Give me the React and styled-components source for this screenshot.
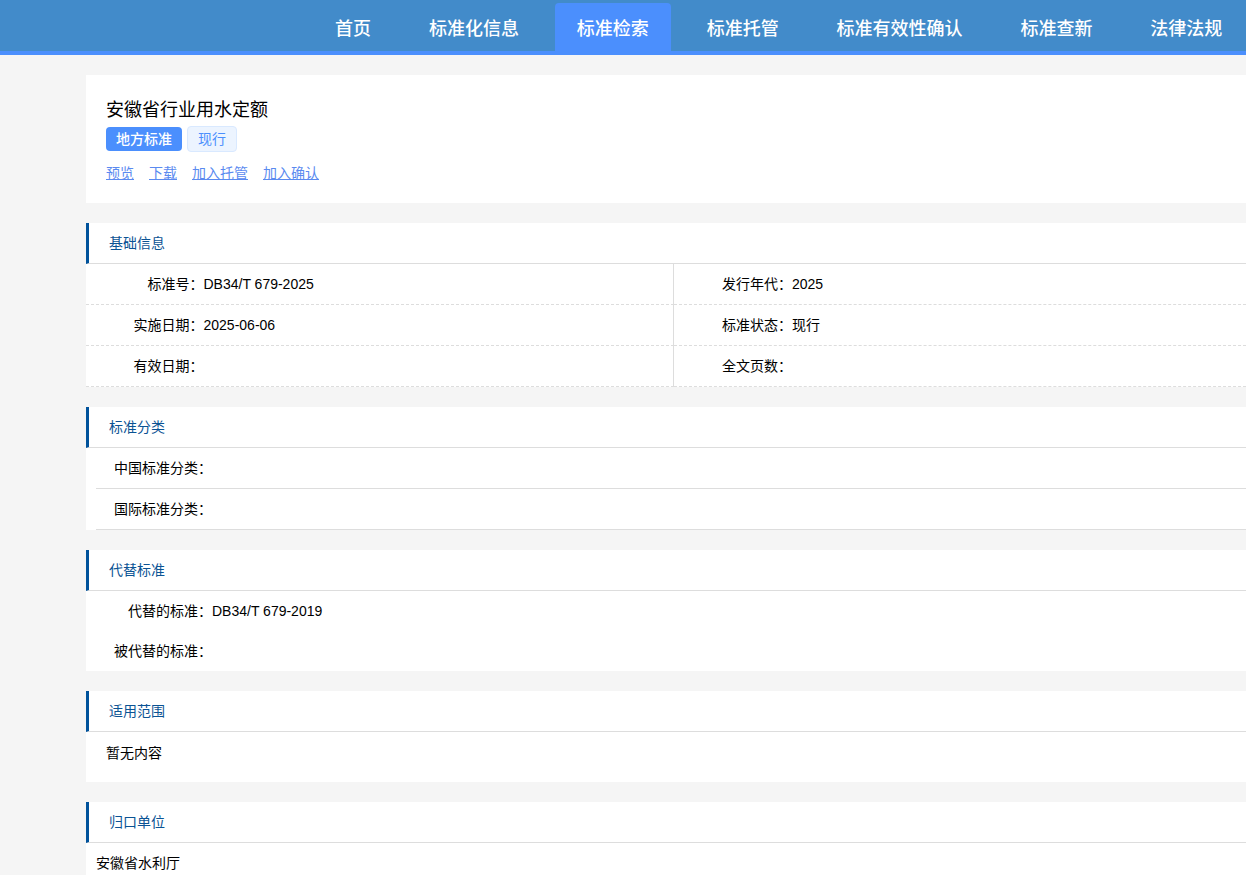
import React from "react";
import styled, { createGlobalStyle } from "styled-components";

const GlobalStyle = createGlobalStyle`
    html, body {
        margin: 0;
        padding: 0;
        background: #f5f5f5;
        overflow: hidden;
        height: 875px;
    }
    #root {
        font-family: "Liberation Sans", "Noto Sans CJK SC", sans-serif;
        font-size: 14px;
        color: #000;
    }
`;

// 상단 메뉴
const Header = styled.div`
    display: flex;
    align-items: flex-end;
    box-sizing: border-box;
    height: 55px;
    padding-left: 313px;
    background: #428bca;
    border-bottom: 4px solid #4b8ffd;
`;

const NavItem = styled.a`
    box-sizing: border-box;
    height: 48px;
    line-height: 52px;
    padding: 0 22px;
    margin-right: 13.9px;
    flex-shrink: 0;
    color: #fff;
    font-size: 18px;
    font-weight: 500;
    border-radius: 4px 4px 0 0;
    background: ${(props) => (props.$active ? "#4b8ffd" : "transparent")};
`;

const Main = styled.div`
    width: 1175px;
    margin: 20px 0 0 86px;
`;

const Card = styled.div`
    background: #fff;
    margin-bottom: 20px;
`;

const TitleCard = styled(Card)`
    box-sizing: border-box;
    height: 128px;
    padding: 22px 20px 0 20px;
`;

const Title = styled.div`
    font-size: 18px;
    line-height: 26px;
`;

const TagRow = styled.div`
    display: flex;
    align-items: center;
    gap: 5px;
    margin-top: 3px;
`;

const Tag = styled.span`
    box-sizing: border-box;
    display: inline-block;
    border-radius: 4px;
    line-height: 1;
    text-align: center;
    padding-top: 5px;
    ${(props) =>
        props.$primary
            ? `
        width: 76px;
        height: 24px;
        background: #4b8ffd;
        color: #fff;
        font-weight: 500;
    `
            : `
        width: 50px;
        height: 26px;
        background: #ecf4ff;
        border: 1px solid #d9e9ff;
        color: #4b8ffd;
    `}
`;

const LinkRow = styled.div`
    display: flex;
    gap: 15px;
    margin-top: 11px;
`;

const ActionLink = styled.a`
    color: #5a8af0;
    text-decoration: underline;
    line-height: 20px;
`;

const SectionHead = styled.div`
    box-sizing: border-box;
    height: 41px;
    line-height: 41px;
    padding-left: 20px;
    color: #0b5394;
    border-left: 3px solid #00529b;
    border-bottom: 1px solid #ddd;
`;

const InfoGrid = styled.div`
    display: grid;
    grid-template-columns: 587.5px 587.5px;
`;

const InfoCell = styled.div`
    box-sizing: border-box;
    display: flex;
    height: 41px;
    line-height: 40px;
    border-bottom: 1px dashed #ddd;
    border-right: ${(props) => (props.$divided ? "1px solid #ddd" : "none")};
`;

const ClassRow = styled.div`
    box-sizing: border-box;
    display: flex;
    height: 41px;
    line-height: 40px;
    margin-left: 10px;
    border-bottom: 1px solid #ddd;
`;

const PlainRow = styled.div`
    display: flex;
    height: 40px;
    line-height: 40px;
`;

const Label = styled.span`
    flex-shrink: 0;
    width: ${(props) => props.$width}px;
    text-align: right;
`;

const Body = styled.div`
    box-sizing: border-box;
    height: 50px;
    line-height: ${(props) => props.$line || 40}px;
    padding-left: ${(props) => props.$left}px;
`;

const menus = ["首页", "标准化信息", "标准检索", "标准托管", "标准有效性确认", "标准查新", "法律法规"];

const infoRows = [
    ["标准号：", "DB34/T 679-2025", "发行年代：", "2025"],
    ["实施日期：", "2025-06-06", "标准状态：", "现行"],
    ["有效日期：", "", "全文页数：", ""],
];

const App = () => {
    return (
        <>
            <GlobalStyle />
            <Header>
                {menus.map((name) => (
                    <NavItem key={name} $active={name === "标准检索"}>{name}</NavItem>
                ))}
            </Header>
            <Main>
                <TitleCard>
                    <Title>安徽省行业用水定额</Title>
                    <TagRow>
                        <Tag $primary>地方标准</Tag>
                        <Tag>现行</Tag>
                    </TagRow>
                    <LinkRow>
                        <ActionLink>预览</ActionLink>
                        <ActionLink>下载</ActionLink>
                        <ActionLink>加入托管</ActionLink>
                        <ActionLink>加入确认</ActionLink>
                    </LinkRow>
                </TitleCard>

                <Card>
                    <SectionHead>基础信息</SectionHead>
                    <InfoGrid>
                        {infoRows.map((row) => (
                            <React.Fragment key={row[0]}>
                                <InfoCell $divided>
                                    <Label $width={117.5}>{row[0]}</Label>
                                    <span>{row[1]}</span>
                                </InfoCell>
                                <InfoCell>
                                    <Label $width={118.5}>{row[2]}</Label>
                                    <span>{row[3]}</span>
                                </InfoCell>
                            </React.Fragment>
                        ))}
                    </InfoGrid>
                </Card>

                <Card>
                    <SectionHead>标准分类</SectionHead>
                    <ClassRow><Label $width={116}>中国标准分类：</Label></ClassRow>
                    <ClassRow><Label $width={116}>国际标准分类：</Label></ClassRow>
                </Card>

                <Card>
                    <SectionHead>代替标准</SectionHead>
                    <PlainRow>
                        <Label $width={126}>代替的标准：</Label>
                        <span>DB34/T 679-2019</span>
                    </PlainRow>
                    <PlainRow>
                        <Label $width={126}>被代替的标准：</Label>
                    </PlainRow>
                </Card>

                <Card>
                    <SectionHead>适用范围</SectionHead>
                    <Body $left={20} $line={42}>暂无内容</Body>
                </Card>

                <Card>
                    <SectionHead>归口单位</SectionHead>
                    <Body $left={10}>安徽省水利厅</Body>
                </Card>
            </Main>
        </>
    );
};

export default App;
